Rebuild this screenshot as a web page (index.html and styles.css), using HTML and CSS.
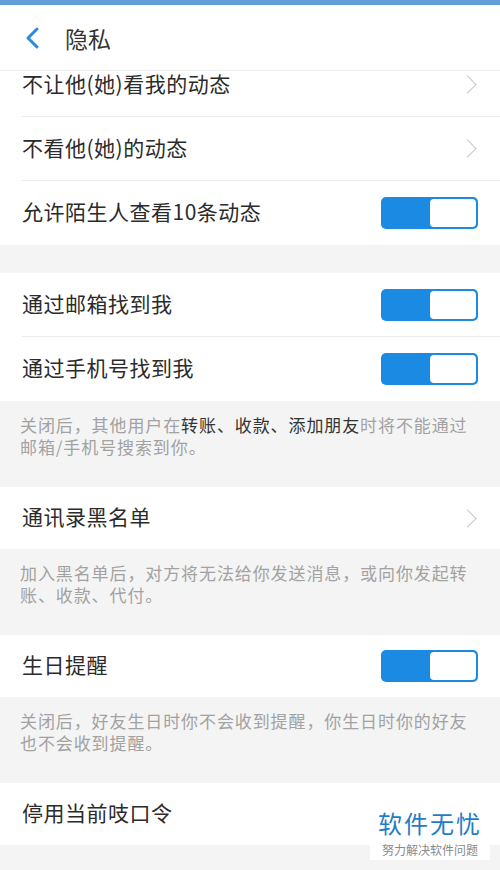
FILE: index.html
```html
<!DOCTYPE html>
<html lang="zh-CN">
<head>
  <meta charset="UTF-8" />
  <title>隐私</title>
  <link rel="stylesheet" href="styles.css">
</head>
<body>

  <div class="status-strip"></div>

  <header class="top-bar">
    <svg class="back" width="18" height="24" viewBox="0 0 18 24">
      <path d="M14 3 L5 12 L14 21" fill="none" stroke="#2a8ce0" stroke-width="3" stroke-linecap="round" stroke-linejoin="round"/>
    </svg>
    <h1>隐私</h1>
  </header>

  <div class="viewport">
    <div class="scroll">

      <section class="group">
        <div class="row">
          <span class="label">不让他(她)看我的动态</span>
          <span class="chevron"></span>
        </div>
        <div class="row">
          <span class="label">不看他(她)的动态</span>
          <span class="chevron"></span>
        </div>
        <div class="row">
          <span class="label">允许陌生人查看10条动态</span>
          <span class="switch"><span class="knob"></span></span>
        </div>
      </section>

      <div class="gap"></div>

      <section class="group">
        <div class="row">
          <span class="label">通过邮箱找到我</span>
          <span class="switch"><span class="knob"></span></span>
        </div>
        <div class="row">
          <span class="label">通过手机号找到我</span>
          <span class="switch"><span class="knob"></span></span>
        </div>
      </section>

      <p class="note">关闭后，其他用户在<span class="em">转账、收款、添加朋友</span>时将不能通过邮箱/手机号搜索到你。</p>

      <section class="group">
        <div class="row single">
          <span class="label">通讯录黑名单</span>
          <span class="chevron"></span>
        </div>
      </section>

      <p class="note">加入黑名单后，对方将无法给你发送消息，或向你发起转账、收款、代付。</p>

      <section class="group">
        <div class="row single">
          <span class="label">生日提醒</span>
          <span class="switch"><span class="knob"></span></span>
        </div>
      </section>

      <p class="note">关闭后，好友生日时你不会收到提醒，你生日时你的好友也不会收到提醒。</p>

      <section class="group">
        <div class="row single">
          <span class="label">停用当前吱口令</span>
        </div>
      </section>

    </div>
  </div>

  <!-- watermark -->
  <div class="watermark">
    <div class="wm-title">软件无忧</div>
    <div class="wm-sub">努力解决软件问题</div>
  </div>

</body>
</html>
```

FILE: styles.css
```css
* {
  box-sizing: border-box;
}

body {
  margin: 0;
  width: 500px;
  height: 870px;
  overflow: hidden;
  position: relative;
  background: #f4f4f4;
  font-family: "Noto Sans CJK SC", "Noto Sans", sans-serif;
  color: #2b2b2b;
}

.status-strip {
  height: 5px;
  background: #659ed6;
}

.top-bar {
  height: 66px;
  display: flex;
  align-items: center;
  padding-left: 23px;
  background: #fff;
  border-bottom: 1px solid #ececec;
  position: relative;
  z-index: 2;
}

.back {
  display: block;
  margin-top: 1px;
}

.top-bar h1 {
  margin: 0 0 0 24px;
  font-size: 23px;
  font-weight: 400;
  color: #333;
}

.viewport {
  height: 799px;
  overflow: hidden;
}

.scroll {
  margin-top: -18px;
}

.group {
  background: #fff;
}

.row {
  height: 64px;
  margin-left: 22px;
  padding: 0 22px 4px 0;
  display: flex;
  align-items: center;
  justify-content: space-between;
  border-bottom: 1px solid #ececec;
}

.row:last-child {
  border-bottom: none;
}

.row.single {
  height: 62px;
}

.label {
  font-size: 21px;
  letter-spacing: 0.5px;
}

.chevron {
  width: 13px;
  height: 13px;
  margin: 4px 4px 0 0;
  border-top: 1.5px solid #c6c6c6;
  border-right: 1.5px solid #c6c6c6;
  transform: rotate(45deg);
}

.switch {
  width: 97px;
  height: 32px;
  margin-top: 4px;
  padding: 2px;
  border-radius: 5px;
  background: #1a8ae3;
  display: flex;
  justify-content: flex-end;
}

.knob {
  width: 46px;
  height: 28px;
  border-radius: 4px;
  background: #fff;
}

.gap {
  height: 28px;
}

.note {
  margin: 0;
  height: 86px;
  padding: 13px 20px 0;
  font-size: 17px;
  line-height: 22px;
  letter-spacing: 0.9px;
  color: #a2a2a2;
}

.note .em {
  color: #333;
}

.watermark {
  position: absolute;
  right: 10px;
  bottom: 10px;
  width: 120px;
  text-align: center;
}

.wm-title {
  font-size: 24px;
  line-height: 28px;
  letter-spacing: 2px;
  color: #1f7dc7;
}

.wm-sub {
  margin-top: 3px;
  padding: 2px 0;
  background: #fff;
  font-size: 12px;
  line-height: 16px;
  color: #8a8a8a;
}
```
